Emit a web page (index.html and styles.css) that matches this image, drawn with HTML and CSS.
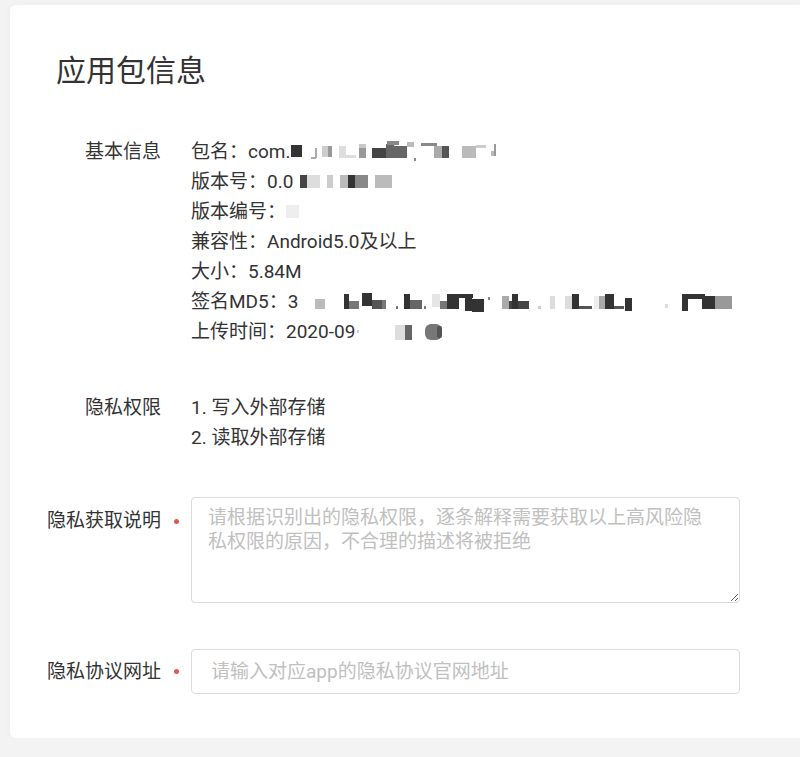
FILE: index.html
```html
<!DOCTYPE html>
<html lang="zh-CN">
<head>
<meta charset="utf-8">
<title>应用包信息</title>
<link rel="stylesheet" href="styles.css">
</head>
<body>
<div class="card">
  <h1 class="title">应用包信息</h1>

  <div class="row row-info">
    <div class="label">基本信息</div>
    <div class="mark"></div>
    <div class="content">
      <div class="line">包名：com.<svg class="mosaic" width="212" height="30" viewBox="0 0 212 30">
        <rect x="1" y="8" width="11" height="12" fill="#333"/>
        <rect x="25" y="11" width="2" height="10" fill="#aaa"/>
        <rect x="21" y="20" width="5" height="2" fill="#aaa"/>
        <rect x="32" y="9" width="6" height="11" fill="#ccc"/>
        <rect x="38" y="9" width="4" height="11" fill="#999"/>
        <rect x="49" y="9" width="7" height="12" fill="#ddd"/>
        <rect x="56" y="18" width="10" height="3" fill="#ddd"/>
        <rect x="69" y="7" width="7" height="4" fill="#c8c8c8"/>
        <rect x="69" y="11" width="7" height="10" fill="#999"/>
        <rect x="82" y="11" width="14" height="10" fill="#444"/>
        <rect x="96" y="7" width="8" height="14" fill="#666"/>
        <rect x="97" y="4" width="12" height="4" fill="#888"/>
        <rect x="104" y="9" width="13" height="12" fill="#666"/>
        <rect x="117" y="5" width="7" height="5" fill="#bbb"/>
        <rect x="124" y="21" width="2" height="3" fill="#888"/>
        <rect x="131" y="6" width="16" height="3" fill="#888"/>
        <rect x="144" y="9" width="8" height="12" fill="#aaa"/>
        <rect x="152" y="9" width="7" height="12" fill="#555"/>
        <rect x="172" y="9" width="14" height="12" fill="#bbb"/>
        <rect x="186" y="8" width="10" height="3" fill="#ccc"/>
        <rect x="204" y="7" width="2" height="12" fill="#999"/>
        <rect x="201" y="14" width="3" height="5" fill="#bbb"/>
      </svg></div>
      <div class="line">版本号：0.0 <svg class="mosaic" width="96" height="30" viewBox="0 0 96 30">
        <rect x="2" y="8" width="7" height="13" fill="#444"/>
        <rect x="9" y="8" width="13" height="13" fill="#ddd"/>
        <rect x="29" y="8" width="6" height="13" fill="#ccc"/>
        <rect x="42" y="8" width="8" height="13" fill="#bbb"/>
        <rect x="50" y="8" width="7" height="13" fill="#333"/>
        <rect x="57" y="8" width="13" height="13" fill="#888"/>
        <rect x="77" y="8" width="17" height="13" fill="#bbb"/>
      </svg></div>
      <div class="line">版本编号：<svg class="mosaic" width="14" height="30" viewBox="0 0 14 30">
        <rect x="0" y="8" width="13" height="13" fill="#eee"/>
      </svg></div>
      <div class="line">兼容性：Android5.0及以上</div>
      <div class="line">大小：5.84M</div>
      <div class="line">签名MD5：3<svg class="mosaic" width="436" height="30" viewBox="0 0 436 30">
        <rect x="17" y="12" width="10" height="10" fill="#bbb"/>
        <rect x="46" y="7" width="5" height="15" fill="#333"/>
        <rect x="51" y="14" width="10" height="8" fill="#777"/>
        <rect x="64" y="6" width="10" height="13" fill="#333"/>
        <rect x="74" y="13" width="10" height="9" fill="#555"/>
        <rect x="84" y="13" width="4" height="9" fill="#777"/>
        <rect x="98" y="19" width="2" height="3" fill="#777"/>
        <rect x="106" y="7" width="6" height="15" fill="#333"/>
        <rect x="112" y="13" width="12" height="9" fill="#666"/>
        <rect x="126" y="19" width="2" height="3" fill="#777"/>
        <rect x="134" y="7" width="8" height="13" fill="#e5e5e5"/>
        <rect x="142" y="14" width="7" height="8" fill="#777"/>
        <rect x="149" y="7" width="12" height="15" fill="#333"/>
        <rect x="161" y="7" width="14" height="4" fill="#333"/>
        <rect x="167" y="11" width="7" height="13" fill="#333"/>
        <rect x="174" y="12" width="12" height="13" fill="#333"/>
        <rect x="190" y="10" width="2" height="3" fill="#888"/>
        <rect x="204" y="9" width="7" height="13" fill="#aaa"/>
        <rect x="211" y="14" width="20" height="8" fill="#444"/>
        <rect x="214" y="7" width="6" height="15" fill="#333"/>
        <rect x="240" y="19" width="3" height="3" fill="#ccc"/>
        <rect x="252" y="9" width="5" height="13" fill="#ddd"/>
        <rect x="267" y="9" width="7" height="13" fill="#ddd"/>
        <rect x="274" y="7" width="7" height="15" fill="#333"/>
        <rect x="281" y="19" width="13" height="3" fill="#555"/>
        <rect x="296" y="9" width="5" height="13" fill="#eee"/>
        <rect x="301" y="9" width="6" height="13" fill="#aaa"/>
        <rect x="307" y="7" width="9" height="15" fill="#333"/>
        <rect x="316" y="19" width="10" height="3" fill="#555"/>
        <rect x="327" y="11" width="7" height="13" fill="#333"/>
        <rect x="367" y="17" width="3" height="4" fill="#ddd"/>
        <rect x="384" y="7" width="23" height="5" fill="#333"/>
        <rect x="384" y="12" width="6" height="12" fill="#333"/>
        <rect x="404" y="9" width="13" height="13" fill="#333"/>
        <rect x="417" y="9" width="17" height="13" fill="#999"/>
      </svg></div>
      <div class="line">上传时间：2020-09<svg class="mosaic" width="90" height="30" viewBox="0 0 90 30">
        <rect x="2" y="13" width="2" height="3" fill="#ccc"/>
        <rect x="40" y="8" width="10" height="15" fill="#ddd"/>
        <rect x="50" y="8" width="7" height="15" fill="#666"/>
        <rect x="70" y="7" width="17" height="16" rx="6" fill="#777"/>
        <rect x="82" y="9" width="5" height="12" rx="2" fill="#555"/>
      </svg></div>
    </div>
  </div>

  <div class="row row-perm">
    <div class="label">隐私权限</div>
    <div class="mark"></div>
    <div class="content">
      <div class="line">1. 写入外部存储</div>
      <div class="line">2. 读取外部存储</div>
    </div>
  </div>

  <div class="row row-desc">
    <div class="label label-area">隐私获取说明</div>
    <div class="mark mark-area"><span class="dot"></span></div>
    <div class="content">
      <textarea class="textarea" placeholder="请根据识别出的隐私权限，逐条解释需要获取以上高风险隐私权限的原因，不合理的描述将被拒绝"></textarea>
    </div>
  </div>

  <div class="row row-url">
    <div class="label label-input">隐私协议网址</div>
    <div class="mark mark-input"><span class="dot"></span></div>
    <div class="content">
      <input class="input" type="text" placeholder="请输入对应app的隐私协议官网地址">
    </div>
  </div>
</div>
</body>
</html>
```

FILE: styles.css
```css
html, body {
  margin: 0;
  overflow: hidden;
  background: #f3f3f3;
}

body {
  padding: 5px 0 0 10px;
  font-family: Roboto, "Noto Sans CJK SC", sans-serif;
  font-size: 19px;
  color: #333;
}

.card {
  width: 800px;
  background: #fff;
  border-radius: 6px;
  padding: 45px 0 44px;
  box-shadow: 0 0 10px rgba(0, 0, 0, 0.03);
}

.title {
  margin: 0 0 45px 46px;
  font-size: 30px;
  line-height: 42px;
  font-weight: 400;
  color: #333;
}

.row {
  display: flex;
  align-items: flex-start;
}

.row-info { margin-bottom: 46px; }
.row-perm { margin-bottom: 44px; }
.row-desc { margin-bottom: 46px; }

.label {
  width: 151px;
  flex-shrink: 0;
  text-align: right;
  line-height: 30px;
  white-space: nowrap;
  color: #333;
}

.label-area { line-height: 48px; }
.label-input { line-height: 45px; }

.mark {
  width: 30px;
  flex-shrink: 0;
  display: flex;
  align-items: center;
}

.mark-area { height: 48px; }
.mark-input { height: 45px; }

.dot {
  width: 5px;
  height: 5px;
  border-radius: 50%;
  background: #e0574d;
  margin-left: 13px;
}

.content {
  width: 549px;
  flex-shrink: 0;
}

.line {
  line-height: 30px;
  height: 30px;
  white-space: nowrap;
}

.mosaic {
  vertical-align: top;
}

.textarea {
  display: block;
  width: 549px;
  height: 106px;
  box-sizing: border-box;
  border: 1px solid #dcdcdc;
  border-radius: 4px;
  padding: 8px 28px 8px 16px;
  font-family: Roboto, "Noto Sans CJK SC", sans-serif;
  font-size: 19px;
  line-height: 24px;
  color: #333;
  background: #fff;
  outline: none;
  margin: 0;
}

.input {
  display: block;
  width: 549px;
  height: 45px;
  box-sizing: border-box;
  border: 1px solid #dcdcdc;
  border-radius: 4px;
  padding: 0 19px;
  font-family: Roboto, "Noto Sans CJK SC", sans-serif;
  font-size: 19px;
  color: #333;
  background: #fff;
  outline: none;
  margin: 0;
}

.textarea::placeholder,
.input::placeholder {
  color: #c0c0c0;
  opacity: 1;
}
```
